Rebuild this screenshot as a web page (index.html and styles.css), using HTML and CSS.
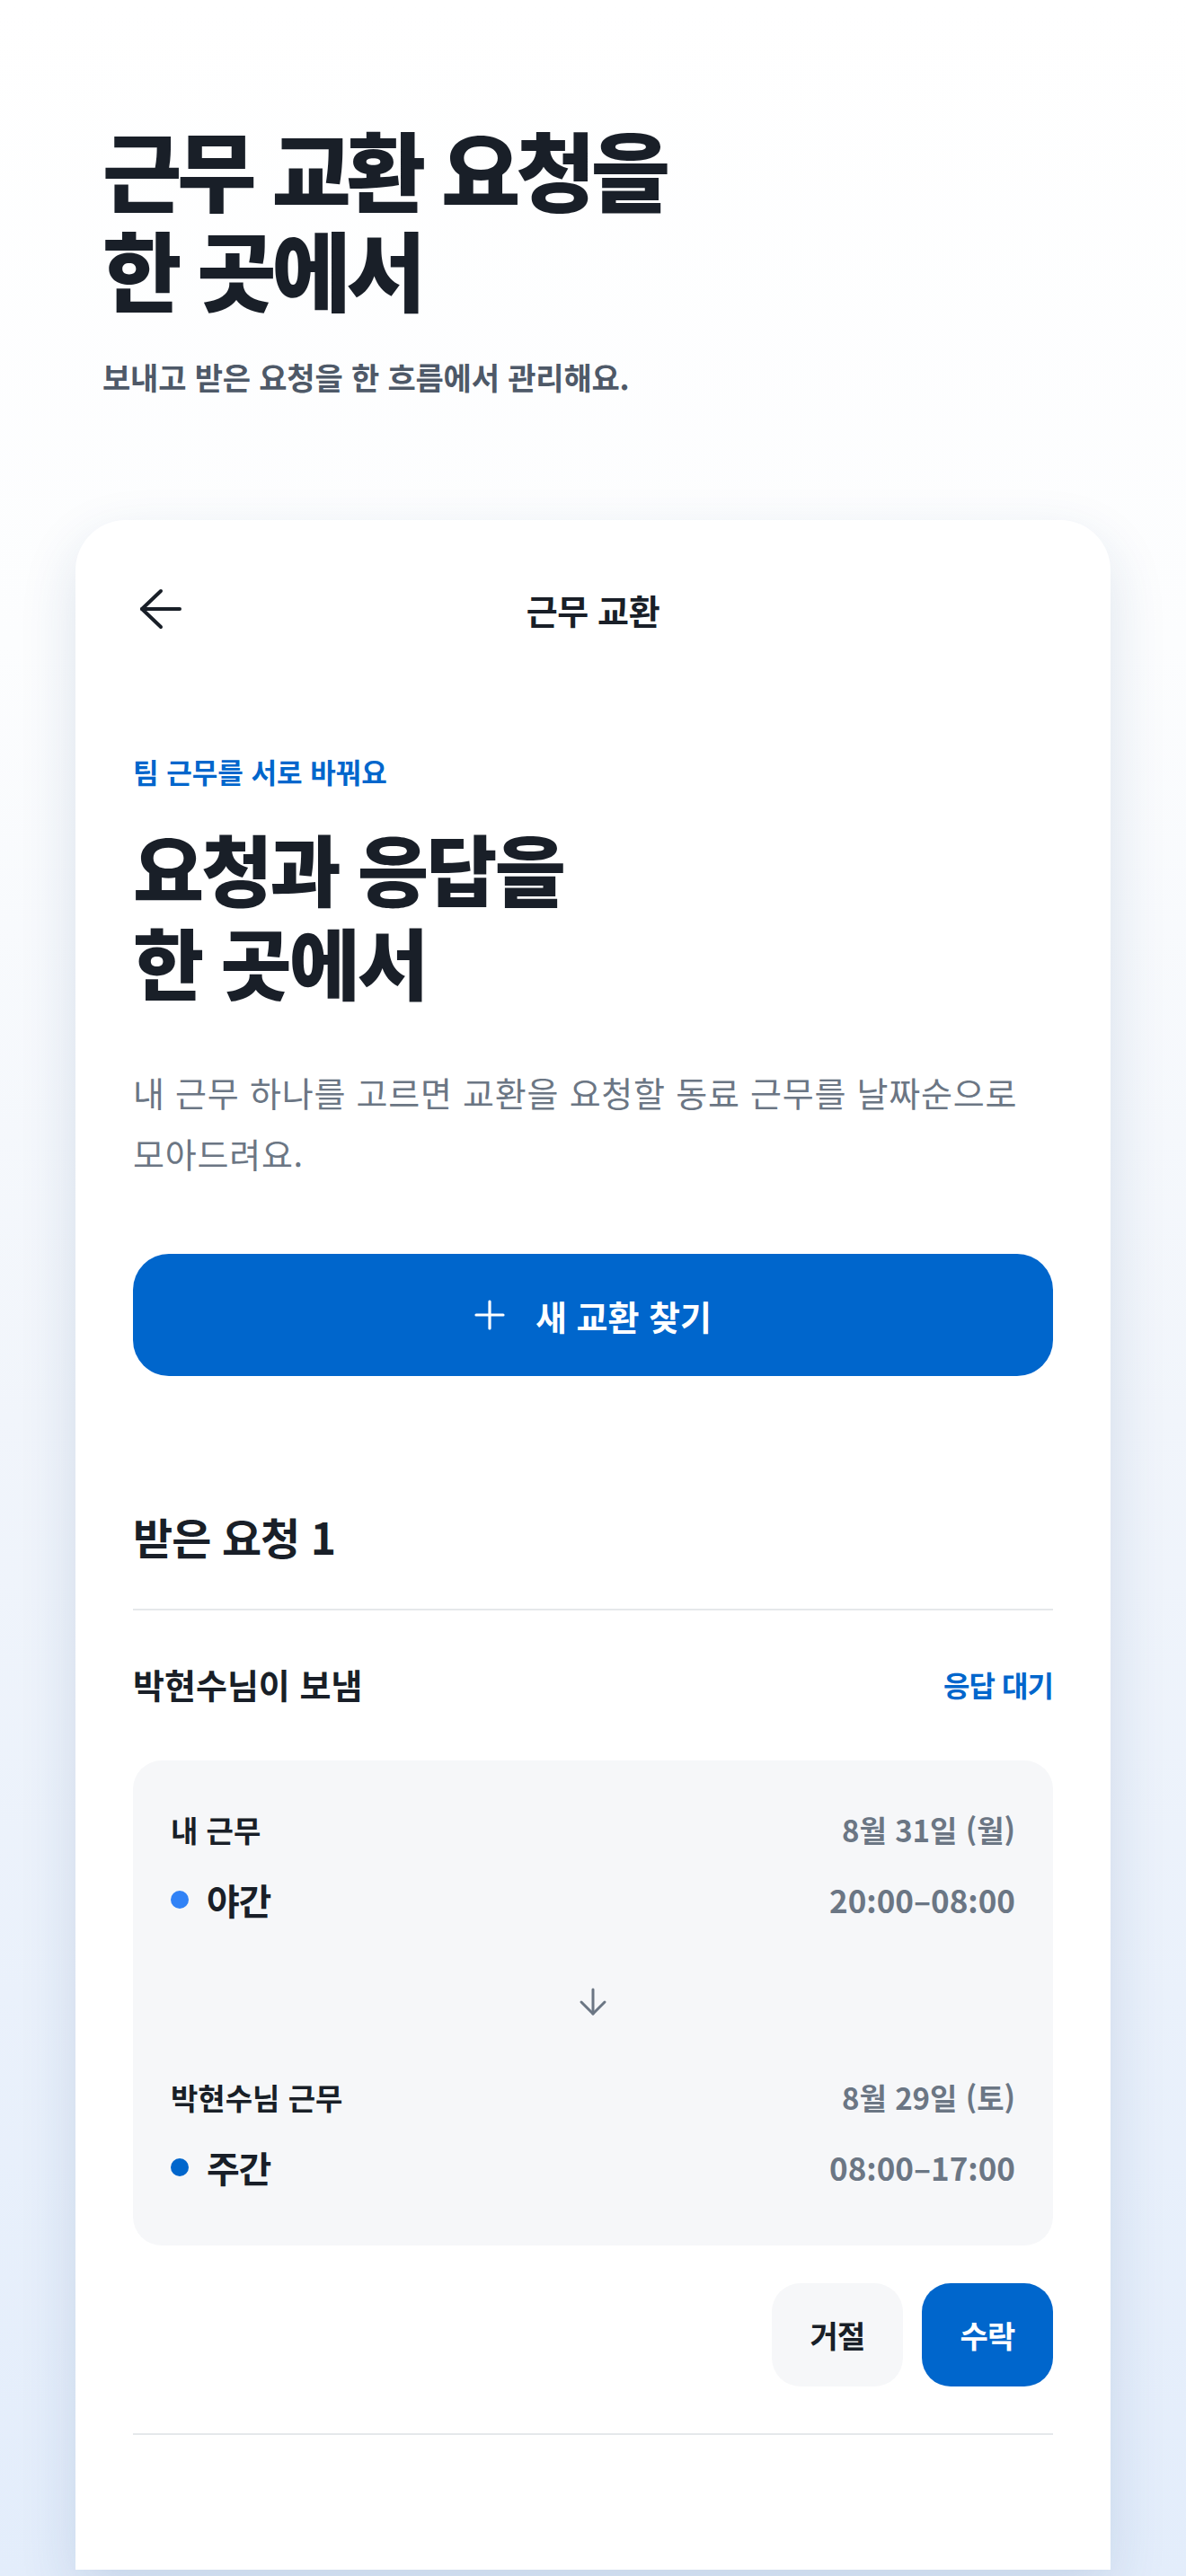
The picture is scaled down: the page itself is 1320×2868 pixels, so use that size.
FILE: index.html
```html
<!DOCTYPE html>
<html lang="ko">
<head>
    <meta charset="UTF-8">
    <meta name="viewport" content="width=device-width, initial-scale=1.0">
    <title>근무 교환</title>
    <link rel="stylesheet" href="styles.css">
</head>
<body>
    <main class="page">
        <section class="hero">
            <h1 class="hero-title">근무 교환 요청을<br>한 곳에서</h1>
            <p class="hero-sub">보내고 받은 요청을 한 흐름에서 관리해요.</p>
        </section>

        <div class="phone">
            <header class="topbar">
                <button class="back-btn" type="button" aria-label="뒤로">
                    <svg width="56" height="56" viewBox="0 0 56 56" fill="none" stroke="#191f28" stroke-width="4" stroke-linecap="round" stroke-linejoin="round">
                        <path d="M52 28H10"/>
                        <path d="M31 8L10 28L31 48"/>
                    </svg>
                </button>
                <h2 class="topbar-title">근무 교환</h2>
                <span></span>
            </header>

            <section class="intro">
                <p class="eyebrow">팀 근무를 서로 바꿔요</p>
                <h2 class="intro-title">요청과 응답을<br>한 곳에서</h2>
                <p class="intro-desc">내 근무 하나를 고르면 교환을 요청할 동료 근무를 날짜순으로 모아드려요.</p>
            </section>

            <button class="primary-btn" type="button">
                <svg width="34" height="34" viewBox="0 0 34 34" fill="none" stroke="#fff" stroke-width="3.2" stroke-linecap="round">
                    <path d="M17 2V32"/>
                    <path d="M2 17H32"/>
                </svg>
                <span>새 교환 찾기</span>
            </button>

            <section class="requests">
                <h3 class="section-title">받은 요청 1</h3>

                <article class="request">
                    <div class="request-head">
                        <span class="request-from">박현수님이 보냄</span>
                        <span class="request-status">응답 대기</span>
                    </div>

                    <div class="swap-box">
                        <div class="shift">
                            <div class="shift-row">
                                <span class="shift-label">내 근무</span>
                                <span class="shift-date">8월 31일 (월)</span>
                            </div>
                            <div class="shift-row">
                                <span class="shift-type"><i class="dot dot-night"></i>야간</span>
                                <span class="shift-time">20:00–08:00</span>
                            </div>
                        </div>

                        <div class="swap-arrow">
                            <svg width="32" height="32" viewBox="0 0 32 32" fill="none" stroke="#6b7684" stroke-width="3" stroke-linecap="round" stroke-linejoin="round">
                                <path d="M16 2V29"/>
                                <path d="M3 16L16 29L29 16"/>
                            </svg>
                        </div>

                        <div class="shift">
                            <div class="shift-row">
                                <span class="shift-label">박현수님 근무</span>
                                <span class="shift-date">8월 29일 (토)</span>
                            </div>
                            <div class="shift-row">
                                <span class="shift-type"><i class="dot dot-day"></i>주간</span>
                                <span class="shift-time">08:00–17:00</span>
                            </div>
                        </div>
                    </div>

                    <div class="request-actions">
                        <button class="btn-decline" type="button">거절</button>
                        <button class="btn-accept" type="button">수락</button>
                    </div>
                </article>
            </section>
        </div>
    </main>
</body>
</html>
```

FILE: styles.css
```css
* {
    box-sizing: border-box;
}
html, body {
    margin: 0;
    padding: 0;
}
body {
    font-family: "Noto Sans CJK KR", "Noto Sans", sans-serif;
    color: #191f28;
    background: linear-gradient(180deg, #ffffff 0%, #fcfdfe 25%, #f1f5fb 55%, #e3edfb 100%);
}
.page {
    width: 1320px;
    height: 2868px;
    overflow: hidden;
    display: flex;
    flex-direction: column;
}

/* hero */
.hero {
    padding: 131px 114px 0;
}
.hero-title {
    margin: 0;
    font-size: 96px;
    line-height: 111px;
    font-weight: 800;
    letter-spacing: -0.052em;
}
.hero-sub {
    margin: 44px 0 0;
    font-size: 34px;
    line-height: 46px;
    font-weight: 600;
    color: #4e5968;
    letter-spacing: -0.005em;
}

/* phone card */
.phone {
    flex: 1;
    margin: 136px 84px 7px;
    padding: 51px 64px 0;
    background: #fff;
    border-radius: 56px 56px 0 0;
    box-shadow: 0 24px 64px rgba(30, 70, 130, 0.14);
}
.topbar {
    display: grid;
    grid-template-columns: 1fr auto 1fr;
    align-items: center;
    height: 96px;
}
.back-btn {
    width: 56px;
    height: 56px;
    padding: 0;
    border: none;
    background: none;
    display: flex;
}
.topbar-title {
    margin: 0;
    font-size: 38px;
    font-weight: 600;
    letter-spacing: -0.01em;
}

.intro {
    padding-top: 111px;
}
.eyebrow {
    margin: 0;
    font-size: 31px;
    line-height: 44px;
    font-weight: 600;
    color: #0066cc;
}
.intro-title {
    margin: 33px 0 0;
    font-size: 86px;
    line-height: 104px;
    font-weight: 800;
    letter-spacing: -0.033em;
}
.intro-desc {
    margin: 60px 0 0;
    font-size: 38px;
    line-height: 68px;
    font-weight: 400;
    color: #6b7684;
    letter-spacing: 0.02em;
}

.primary-btn {
    width: 100%;
    height: 136px;
    margin-top: 78px;
    border: none;
    border-radius: 40px;
    background: #0066cc;
    color: #fff;
    font-family: inherit;
    font-size: 38px;
    font-weight: 700;
    display: flex;
    align-items: center;
    justify-content: center;
    gap: 34px;
}

/* requests */
.requests {
    padding-top: 146px;
}
.section-title {
    margin: 0;
    font-size: 48px;
    line-height: 64px;
    font-weight: 700;
    letter-spacing: -0.02em;
    padding-bottom: 49px;
    border-bottom: 2px solid #e5e8eb;
}
.request {
    padding-top: 57px;
    padding-bottom: 52px;
    border-bottom: 2px solid #e5e8eb;
}
.request-head {
    display: flex;
    justify-content: space-between;
    align-items: center;
    line-height: 50px;
}
.request-from {
    font-size: 38px;
    font-weight: 600;
}
.request-status {
    font-size: 32px;
    font-weight: 600;
    color: #0066cc;
    letter-spacing: -0.03em;
}

.swap-box {
    margin-top: 60px;
    padding: 55px 42px 61px;
    background: #f6f7f9;
    border-radius: 32px;
}
.shift {
    display: flex;
    flex-direction: column;
    gap: 30px;
}
.shift-row {
    display: flex;
    justify-content: space-between;
    align-items: center;
}
.shift-label {
    font-size: 33px;
    line-height: 44px;
    font-weight: 600;
}
.shift-date {
    font-size: 33px;
    line-height: 44px;
    font-weight: 600;
    color: #6b7684;
}
.shift-type {
    display: flex;
    align-items: center;
    gap: 20px;
    font-size: 40px;
    line-height: 52px;
    font-weight: 700;
    letter-spacing: -0.03em;
}
.dot {
    width: 20px;
    height: 20px;
    border-radius: 50%;
}
.dot-night {
    background: #3182f6;
}
.dot-day {
    background: #0066cc;
}
.shift-time {
    font-size: 35px;
    line-height: 52px;
    font-weight: 600;
    color: #6b7684;
}
.swap-arrow {
    display: flex;
    justify-content: center;
    padding: 72px 0 68px;
}
.swap-arrow svg {
    display: block;
}

.request-actions {
    display: flex;
    justify-content: flex-end;
    gap: 21px;
    margin-top: 42px;
}
.request-actions button {
    width: 146px;
    height: 115px;
    border: none;
    border-radius: 32px;
    font-family: inherit;
    font-size: 34px;
    font-weight: 700;
    letter-spacing: -0.02em;
}
.btn-decline {
    background: #f6f7f9;
    color: #191f28;
}
.btn-accept {
    background: #0066cc;
    color: #fff;
}
```
